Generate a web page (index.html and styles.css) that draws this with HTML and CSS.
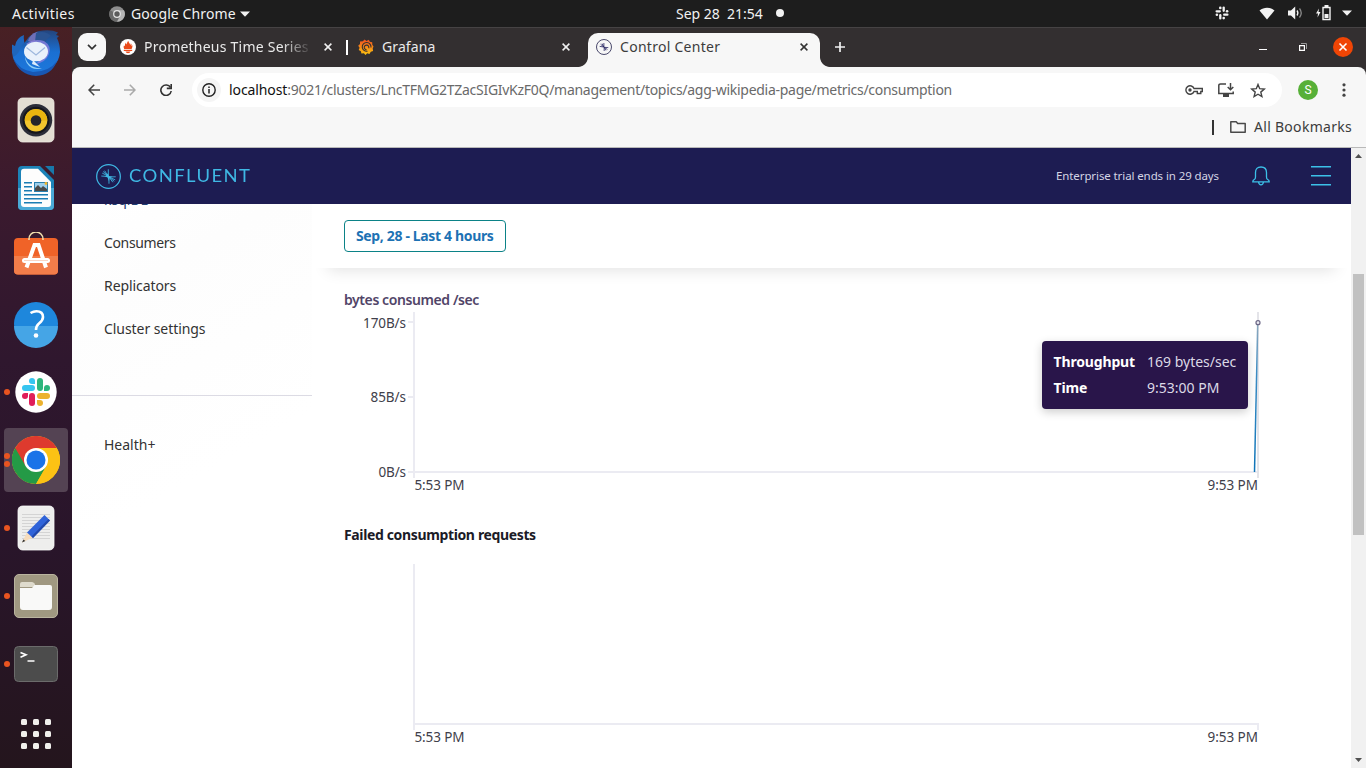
FILE: index.html
```html
<!DOCTYPE html>
<html lang="en">
<head>
<meta charset="utf-8">
<title>Control Center</title>
<link rel="stylesheet" href="styles.css">
</head>
<body>
<div class="desktop">
  <header class="topbar">
    <div class="topbar-left">
      <span class="t activities">Activities</span>
      <svg class="app-icon" width="16" height="16" viewBox="0 0 16 16"><circle cx="8" cy="8" r="7.8" fill="#8d8d8d"/><path d="M8 8L1.2 4.2A7.8 7.8 0 0 0 8 15.8L11 9.500z" fill="#6a6a6a"/><path d="M8 4.300H15a7.800 7.800 0 0 1-7 11.500l3.500-6z" fill="#b5b5b5"/><circle cx="8" cy="8" r="3.900" fill="#e6e6e6"/><circle cx="8" cy="8" r="2.700" fill="#5c5c5c"/></svg>
      <span class="t app-name">Google Chrome</span>
      <svg class="caret" width="10" height="6" viewBox="0 0 10 6"><path d="M0 0.500h10L5 5.700z" fill="#f2f2f2"/></svg>
    </div>
    <div class="clock"><span class="t day">Sep 28</span><span class="t time">21:54</span><i class="dot"></i></div>
    <div class="tray">
      <svg class="tray-slack" width="14" height="14" viewBox="0 0 14 14"><g fill="none" stroke="#f2f2f2" stroke-width="2.300" stroke-linecap="round"><path d="M1.600 5.300h3.200"/><path d="M8.700 1.600v3.200"/><path d="M9.200 8.700h3.200"/><path d="M5.300 9.200v3.200"/></g><g fill="#f2f2f2"><circle cx="5.300" cy="1.900" r="1.300"/><circle cx="12.100" cy="5.300" r="1.300"/><circle cx="8.700" cy="12.100" r="1.300"/><circle cx="1.900" cy="8.700" r="1.300"/></g></svg>
      <svg class="tray-wifi" width="16" height="13" viewBox="0 0 16 13"><path d="M.5 3.500C5-.3 11-.3 15.500 3.500L8 12.500z" fill="#f2f2f2"/></svg>
      <svg class="tray-vol" width="15" height="14" viewBox="0 0 15 14"><path d="M0 4.500h3L7.200.5v13L3 9.500H0z" fill="#f2f2f2"/><path d="M9 4.500q1.800 2.500 0 5" stroke="#f2f2f2" stroke-width="1.300" fill="none"/><path d="M11.500 2.500q3.500 4.500 0 9" stroke="#8a8a8a" stroke-width="1.300" fill="none"/></svg>
      <svg class="tray-bat" width="15" height="16" viewBox="0 0 15 16"><path d="M3 3.500L0 8.500h2L1.500 12.500l3-5.500h-2z" fill="#f2f2f2"/><path d="M7 2.500h7v12H7z" fill="none" stroke="#f2f2f2" stroke-width="1.400"/><path d="M8.500 0h4v2h-4zM8.500 9h4v4h-4z" fill="#f2f2f2"/></svg>
      <svg width="10" height="6" viewBox="0 0 10 6"><path d="M0 0.500h10L5 5.700z" fill="#f2f2f2"/></svg>
    </div>
  </header>

  <nav class="dock">
    <div class="dock-item first"><svg width="48" height="48" viewBox="0 0 48 48"><defs><linearGradient id="tb" x1="0" y1="0" x2="0" y2="1"><stop offset="0" stop-color="#24447c"/><stop offset=".5" stop-color="#1a6fd2"/><stop offset="1" stop-color="#1d78dc"/></linearGradient></defs><path d="M3 17Q4 9 12 6q-1 6 2 12L8 34 2 31Q-1 24 0 15.500z" fill="#1f66bd"/><path d="M14 12Q20 2 31 1.500q9-1 15 2l-2 2.500 3 1-2 2q3 6 3 14a24 23 0 0 1-47 5q5-2 7-8 2-5 6-8z" fill="url(#tb)"/><path d="M16 12q2-7 9-9l3 4-6 7q-3-1-6-2z" fill="#6e6fb8"/><path d="M24 4q9-3 15 3-3 1-6 6-5-3-10 0z" fill="#2a5392"/><path d="M14 15q8-6 18-3 8 5 5 13-3 8-13 10 7-6 6-14z" fill="#8a7fdd" opacity=".8"/><path d="M13 27q3 13 17 12-5 2-10 0-7-4-7-12z" fill="#8fd0f8"/><ellipse cx="24" cy="22.500" rx="12" ry="9.800" fill="#e9f1fb"/><path d="M14.500 18.500L24 26l9-7.500" fill="none" stroke="#9db7dd" stroke-width="1.200"/><path d="M21 31l7 7-8-3z" fill="#dcecfb"/><path d="M1 29q6 12 20 14 16 0 24-11-5 14-21 15Q7 46 1 29z" fill="#1857b4"/></svg></div>
    <div class="dock-item"><svg width="48" height="48" viewBox="0 0 48 48"><rect x="6" y="2" width="36" height="44" rx="4.500" fill="#e3ded3" stroke="#efebe3" stroke-width=".8"/><circle cx="24" cy="24.300" r="16.200" fill="#2b2d38"/><circle cx="24" cy="24.300" r="13.500" fill="#16171c"/><circle cx="24" cy="24.300" r="11.300" fill="#f2c52d"/><path d="M12.700 24.500a11.300 11.300 0 0 1 22.600 0z" fill="#e8b40f"/><circle cx="24" cy="24.500" r="5.300" fill="#24252b"/></svg></div>
    <div class="dock-item"><svg width="48" height="48" viewBox="0 0 48 48"><path d="M10 2h18l14 14v26a4 4 0 0 1-4 4H10a4 4 0 0 1-4-4V6a4 4 0 0 1 4-4z" fill="#1c83b8"/><path d="M6 24h36v18a4 4 0 0 1-4 4H10a4 4 0 0 1-4-4z" fill="#4aa9d6"/><path d="M12 4.800h14L39 18v22a3 3 0 0 1-3 3H12a3 3 0 0 1-3-3V7.800a3 3 0 0 1 3-3z" fill="#fdfdfd"/><path d="M33 2h9v9z" fill="#1878ab"/><path d="M12 18.700h8M12 22.700h8M12 26.700h8M12 30.700h24M12 34.700h24M12 38.700h18" stroke="#1b7db4" stroke-width="1.600"/><rect x="22.500" y="18.500" width="13" height="9" fill="#9fd0ec" stroke="#2a7fae"/><path d="M23 27v-3l3-3 3 3 2-2 4 3v2z" fill="#4b4b4b"/><circle cx="34" cy="19.500" r="1.400" fill="#f2b52b"/></svg></div>
    <div class="dock-item"><svg width="48" height="48" viewBox="0 0 48 48"><rect x="2" y="6" width="44" height="36.500" rx="4" fill="#f06328"/><path d="M2 24h44v14.500a4 4 0 0 1-4 4H6a4 4 0 0 1-4-4z" fill="#f27d4a"/><path d="M17 8v-1a7 7 0 0 1 14 0v1" fill="none" stroke="#f3e0ae" stroke-width="1.500"/><path d="M14.500 35.500L22.500 13h4L34 35.500" fill="none" stroke="#fff" stroke-width="4"/><rect x="10" y="26" width="28" height="5" rx="2.500" fill="#fff"/><path d="M12 28.500h24" stroke="#f9d5c5" stroke-width="1"/></svg></div>
    <div class="dock-item"><svg width="48" height="48" viewBox="0 0 48 48"><circle cx="24" cy="24" r="22" fill="#1e87dc"/><path d="M2 26a22 22 0 0 0 44 0z" fill="#45a5e6"/><path d="M18.500 13q3-1.800 6-1.800c4.500 0 6.500 2.300 6.500 5.800 0 3-1.500 4.500-4 6.500-2.300 1.800-3 3-3 6.500" fill="none" stroke="#fff" stroke-width="2.600"/><circle cx="24" cy="35.500" r="2.300" fill="#fff"/></svg></div>
    <div class="dock-item"><i class="run"></i><svg width="48" height="48" viewBox="0 0 48 48"><circle cx="24" cy="24" r="20.700" fill="#fff"/><g fill="none" stroke-width="6" stroke-linecap="round"><path d="M13 20h7" stroke="#36c5f0"/><path d="M28 13v7" stroke="#2eb67d"/><path d="M28 28h7" stroke="#ecb22e"/><path d="M20 28v7" stroke="#e01e5a"/></g><path d="M23 16h-3a3 3 0 1 1 3-3z" fill="#36c5f0"/><path d="M32 23v-3a3 3 0 1 1 3 3z" fill="#2eb67d"/><path d="M25 32h3a3 3 0 1 1-3 3z" fill="#ecb22e"/><path d="M16 25v3a3 3 0 1 1-3-3z" fill="#e01e5a"/></svg></div>
    <div class="dock-item active"><i class="run up"></i><i class="run down"></i><svg width="48" height="48" viewBox="0 0 48 48"><circle cx="24" cy="24" r="24" fill="#fcc214"/><path d="M24 24H24L3.200 12A24 24 0 0 0 24 48L34.400 30z" fill="#249a46"/><path d="M24 24L13.600 30 3.200 12A24 24 0 0 1 44.800 12z" fill="#de3a2e"/><path d="M24 12h20.800A24 24 0 0 1 24 48l10.400-18z" fill="#fcc214"/><circle cx="24" cy="24" r="12" fill="#fff"/><circle cx="24" cy="24" r="9.500" fill="#1a73e8"/></svg></div>
    <div class="dock-item"><i class="run"></i><svg width="48" height="48" viewBox="0 0 48 48"><rect x="6" y="2" width="36" height="44" rx="4.500" fill="#eeeeed" stroke="#fafafa" stroke-width=".8"/><path d="M10 10.500h28M10 13.500h28M10 16.500h28M10 19.500h28M10 22.500h28M10 25.500h28M10 28.500h28M10 31.500h28M10 34.500h28" stroke="#d4d4d4"/><path d="M10 38.500l5-10 6 5z" fill="#f6dcbc"/><path d="M10 38.500l1.400-3 2 1.500z" fill="#333"/><path d="M15 28.500L32.500 11l5.500 5.500-17 17.500z" fill="#2f63d9"/><path d="M19.500 32.500l17-17.500 1.500 1.500-17 17.500z" fill="#2148ab"/></svg></div>
    <div class="dock-item"><i class="run"></i><svg width="48" height="48" viewBox="0 0 48 48"><rect x="2.500" y="2.500" width="43" height="43" rx="4.500" fill="#a09881" stroke="#bab49f"/><path d="M8 12a2 2 0 0 1 2-2h10q1.500 0 2.500 1.500L24 15H8z" fill="#dfdbcd"/><path d="M8 16h12l2.500-3H38a2 2 0 0 1 2 2v20a3 3 0 0 1-3 3H11a3 3 0 0 1-3-3z" fill="#f9f9f8"/></svg></div>
    <div class="dock-item"><i class="run"></i><svg width="48" height="48" viewBox="0 0 48 48"><rect x="2.500" y="6.500" width="43" height="35" rx="4" fill="#4c4c4c" stroke="#6b6b6b"/><path d="M8.500 12.500l5.500 2.300-5.500 2.400" fill="none" stroke="#fff" stroke-width="1.600"/><path d="M15.500 21h7" stroke="#fff" stroke-width="1.500"/></svg></div>
    <div class="dock-grid"><i></i><i></i><i></i><i></i><i></i><i></i><i></i><i></i><i></i></div>
  </nav>

  <section class="window">
    <div class="tabstrip">
      <div class="tab-search"><svg width="10" height="6" viewBox="0 0 10 6"><path d="M1 .8l4 4 4-4" fill="none" stroke="#333" stroke-width="1.700"/></svg></div>
      <div class="tab tab-prom">
        <svg width="16" height="16" viewBox="0 0 16 16"><circle cx="8" cy="8" r="8" fill="#fff"/><path d="M4.200 10Q3 8 4 6.200q.8 1 1 1Q4.500 5 6 3.500q.2 1.500.8 2Q7 3 8.300 1.800q.2 1.500 1 2.300.8 1 .8 2 .8-.8.8-1.800 1 1.200.6 3l.9-1.200q.4 2-.8 3.900zM3.800 10.700h8.400v1.300H3.800zM5.500 12.600h5Q10 14.200 8 14.200T5.500 12.600z" fill="#ea4b1b"/></svg>
        <span class="tab-title fade"><span class="t prom-title">Prometheus Time Series</span></span>
        <svg class="x" width="8" height="8" viewBox="0 0 8 8"><path d="M.6.600l6.800 6.800M7.400.6L.6 7.400" stroke="#f0f0f0" stroke-width="1.500"/></svg>
      </div>
      <i class="tab-sep"></i>
      <div class="tab tab-graf">
        <svg width="16" height="16" viewBox="0 0 16 16"><defs><linearGradient id="gf" x1="0" y1="0" x2="0" y2="1"><stop offset="0" stop-color="#f0501f"/><stop offset="1" stop-color="#fcc50f"/></linearGradient></defs><path d="M6.500.6L8.500 2l2.300-1.200 1 2 2.400.4.100 2.500L15.500 7.500l-.8 2 .4 2.400-2.300.8-1.400 2.200-2.200-.7L7.500 16l-1.600-1.700-2.500.3-.5-2.300L.7 11l.9-2.200L.2 6.700 2 5.100l0-2.500 2.800-.3z" fill="url(#gf)"/><path d="M13 8.500A4.400 4.400 0 1 0 9.500 12.200M10.700 9.200A2.300 2.300 0 1 0 8.600 10.700" fill="none" stroke="#332f30" stroke-width="1.100"/></svg>
        <span class="tab-title"><span class="t grafana">Grafana</span></span>
        <svg class="x" width="8" height="8" viewBox="0 0 8 8"><path d="M.6.600l6.800 6.800M7.400.6L.6 7.400" stroke="#f0f0f0" stroke-width="1.500"/></svg>
      </div>
      <div class="tab tab-active">
        <svg width="16" height="16" viewBox="0 0 26 26"><circle cx="13" cy="13" r="12.200" fill="none" stroke="#3b3a60" stroke-width="1.500"/><path d="M12.500 13L6 12M12.500 13L7.500 8.500M12.500 13L10 7.500M12.800 13V6.500M13.500 13.500l6.500.5M13.500 13.500l5 3.500M13.500 13.500l2.500 5M13.300 13.500V19.500" stroke="#22205e" stroke-width="1.300"/></svg>
        <span class="tab-title"><span class="t control">Control Center</span></span>
        <svg class="x" width="8" height="8" viewBox="0 0 8 8"><path d="M.6.600l6.800 6.800M7.400.6L.6 7.400" stroke="#333" stroke-width="1.500"/></svg>
      </div>
      <svg class="plus" width="10" height="10" viewBox="0 0 10 10"><path d="M5 0v10M0 5h10" stroke="#f0f0f0" stroke-width="1.700"/></svg>
      <div class="win-buttons">
        <svg width="8" height="8" viewBox="0 0 8 8"><path d="M0 6.500h8" stroke="#fff"/></svg>
        <svg width="8" height="8" viewBox="0 0 8 8"><path d="M.6 2.600h4.800v4.800H.6z" fill="none" stroke="#fff" stroke-width="1.200"/><path d="M2 .5h5.500V6" fill="none" stroke="#999"/></svg>
        <svg width="20" height="20" viewBox="0 0 20 20"><circle cx="10" cy="10" r="10" fill="#f04505"/><path d="M6.500 6.500l7 7M13.500 6.500l-7 7" stroke="#fff" stroke-width="1.600"/></svg>
      </div>
    </div>

    <div class="toolbar-wrap"><div class="toolbar">
      <svg class="nav" width="12" height="12" viewBox="0 0 12 12"><path d="M12 6H1M6.200.7L1 6l5.200 5.300" fill="none" stroke="#444" stroke-width="1.600"/></svg>
      <svg class="nav" width="12" height="12" viewBox="0 0 12 12"><path d="M0 6h11M5.800.7L11 6l-5.200 5.300" fill="none" stroke="#aaa" stroke-width="1.600"/></svg>
      <svg class="nav" width="12" height="12" viewBox="0 0 12 12"><path d="M10.500 3.500A5.200 5.200 0 1 0 11.200 7" fill="none" stroke="#333" stroke-width="1.600"/><path d="M11.200 0v4.400H6.800" fill="none" stroke="#333" stroke-width="1.600"/></svg>
      <div class="omnibox">
        <span class="info"><svg width="14" height="14" viewBox="0 0 14 14"><circle cx="7" cy="7" r="6.200" fill="none" stroke="#222" stroke-width="1.400"/><path d="M7 6v4.500M7 3.500V5" stroke="#222" stroke-width="1.500"/></svg></span>
        <span class="url"><span class="t host">localhost</span><span class="t path">:9021/clusters/LncTFMG2TZacSIGIvKzF0Q/management/topics/agg-wikipedia-page/metrics/consumption</span></span>
        <svg class="key" width="18" height="10" viewBox="0 0 18 10"><path d="M9 3.500h8.300v3h-1.500v2h-3.500v-2H9A4.200 4.200 0 1 1 9 3.500z" fill="none" stroke="#444" stroke-width="1.400"/><circle cx="5" cy="5" r="1.700" fill="#444"/></svg>
        <svg class="inst" width="16" height="15" viewBox="0 0 16 15"><path d="M8 1H2.500Q.8 1 .8 2.500v8h14.400V8.500" fill="none" stroke="#444" stroke-width="1.500"/><path d="M5 11h6v3H5z" fill="#444"/><path d="M12.500 0v6.500M9.700 4l2.800 2.800L15.300 4" fill="none" stroke="#444" stroke-width="1.500"/></svg>
        <svg class="star" width="16" height="15" viewBox="0 0 16 15"><path d="M8 1.500l1.700 4.200 4.600.4-3.500 3 1.100 4.400L8 11.200l-3.900 2.300 1.100-4.400-3.500-3 4.600-.4z" fill="none" stroke="#444" stroke-width="1.400"/></svg>
      </div>
      <span class="avatar">S</span>
      <svg class="dots" width="4" height="14" viewBox="0 0 4 14" fill="#444"><circle cx="2" cy="1.800" r="1.600"/><circle cx="2" cy="7" r="1.600"/><circle cx="2" cy="12.200" r="1.600"/></svg>
    </div></div>

    <div class="bookmarks">
      <i class="bm-sep"></i>
      <svg width="16" height="12" viewBox="0 0 16 12"><path d="M.8.8h5.400l1.500 1.700h7.500v8.700H.8z" fill="none" stroke="#4a4a4a" stroke-width="1.500" stroke-linejoin="round"/></svg>
      <span class="t bm-text">All Bookmarks</span>
    </div>

    <div class="viewport">
      <div class="page">
        <div class="cc-header">
          <svg class="logo" width="25" height="25" viewBox="0 0 26 26" fill="none" stroke="#3fb8e4"><circle cx="13" cy="13" r="12.300" stroke-width="1.300"/><path d="M12.500 13L5.500 12.500M12.500 12.500L6.500 9.500M12.500 12.500L9 7M12.800 13V5.500M12.500 12.500L7.500 7.800" stroke-width=".9"/><path d="M13.500 13.500l7-.2M13.500 13.500l6.500 3M13.500 13.500l4 5.500M13.500 13.500l5.500 4.500M13.500 13.500V20.500" stroke-width=".9"/><path d="M9.500 13l3-3.500.8 3 4 .8-3.300 1.200-.5 3.500-1.500-4z" fill="#3fb8e4" stroke="none"/></svg>
          <span class="t wordmark">CONFLUENT</span>
          <span class="t trial">Enterprise trial ends in 29 days</span>
          <svg class="bell" width="18" height="20" viewBox="0 0 18 20" fill="none" stroke="#3cc0e8" stroke-width="1.300"><path d="M3.500 11V6.500Q3.500 1 9 1t5.500 5.500V11q0 2 1.200 2.500 1.500.6 1.500 2.300H.8q0-1.700 1.500-2.300Q3.500 13 3.500 11zM6.500 16Q7 18.800 9 18.800T11.500 16"/></svg>
          <svg class="burger" width="20" height="20" viewBox="0 0 20 20"><path d="M0 .7h20M0 9.700h20M0 18.700h20" stroke="#3cc0e8" stroke-width="1.400"/></svg>
        </div>
        <div class="cc-body">
          <aside class="side">
            <div class="side-list">
              <div class="side-item"><span class="t s1">ksqlDB</span></div>
              <div class="side-item"><span class="t s2">Consumers</span></div>
              <div class="side-item"><span class="t s3">Replicators</span></div>
              <div class="side-item"><span class="t s4">Cluster settings</span></div>
            </div>
            <div class="side-foot"><span class="t s5">Health+</span></div>
          </aside>
          <main class="main">
            <div class="filter"><div class="range"><span class="t range-text">Sep, 28 - Last 4 hours</span></div></div>
            <h2 class="title"><span class="t bytes">bytes consumed /sec</span></h2>
            <div class="chart">
              <svg width="1039" height="186" viewBox="312 310 1039 186">
                <path d="M414 312v166M408 322h6M408 397h6M408 472h850" stroke="#ebebf2" stroke-width="2" fill="none"/>
                <path d="M1258 312v166" stroke="#e4e4e9" stroke-width="2"/>
                <defs><linearGradient id="ln" gradientUnits="userSpaceOnUse" x1="0" y1="324" x2="0" y2="472"><stop offset="0" stop-color="#8fa9bd"/><stop offset=".35" stop-color="#3a8cc4"/><stop offset="1" stop-color="#0f74b8"/></linearGradient></defs>
                <path d="M1254.500 472L1257.700 324" stroke="url(#ln)" stroke-width="1.500" fill="none"/>
                <circle cx="1258" cy="322.700" r="2" fill="#e9e9f0" stroke="#6b6685" stroke-width="1.200"/>
                <g class="axis"><text x="363" y="328" textLength="43">170B/s</text><text x="370.500" y="402" textLength="35.500">85B/s</text><text x="378.500" y="477" textLength="27.500">0B/s</text><text x="414.500" y="490" textLength="50">5:53 PM</text><text x="1207.500" y="490" textLength="50.500">9:53 PM</text></g>
              </svg>
              <div class="tip"><b class="t k1">Throughput</b><span class="t v1">169 bytes/sec</span><b class="t k2">Time</b><span class="t v2">9:53:00 PM</span></div>
            </div>
            <h2 class="title second"><span class="t failed">Failed consumption requests</span></h2>
            <svg class="chart2" width="1039" height="190" viewBox="312 560 1039 190">
              <path d="M414 564v166M414 724h845M1258 724v6" stroke="#ebebf2" stroke-width="2" fill="none"/>
              <g class="axis"><text x="414.500" y="742" textLength="50">5:53 PM</text><text x="1207.500" y="742" textLength="50.500">9:53 PM</text></g>
            </svg>
          </main>
        </div>
      </div>
      <div class="scroll"><svg width="7" height="4" viewBox="0 0 7 4"><path d="M0 4L3.500 0 7 4z" fill="#505050"/></svg><i class="thumb"></i><svg width="7" height="4" viewBox="0 0 7 4"><path d="M0 0L3.500 4 7 0z" fill="#505050"/></svg></div>
    </div>
  </section>
</div>
</body>
</html>
```
FILE: styles.css
```css
* { box-sizing: border-box; }
body { margin: 0; font-family: "Noto Sans", "Open Sans", sans-serif; font-size: 14px; color: #333; }
svg { display: block; flex: none; }
i { display: block; flex: none; }
.t { white-space: nowrap; display: inline-block; }

.desktop { width: 1366px; height: 768px; overflow: hidden; display: grid; grid-template: 27px 741px / 72px 1294px; background: #fff; }

.topbar { grid-column: 1 / 3; background: #1d1d1d; color: #f2f2f2; display: grid; grid-template-columns: 676px 1fr 152px; align-items: center; font-size: 14px; }
.topbar-left { display: flex; align-items: center; padding-left: 12px; }
.activities { width: 97px; letter-spacing: .45px; }
.app-icon { margin-right: 6px; }
.app-name { width: 109px; letter-spacing: .1px; }
.clock { display: flex; align-items: center; padding-bottom: 1px; }
.day { width: 51px; }
.time { width: 49px; }
.dot { width: 8px; height: 8px; border-radius: 50%; background: #f2f2f2; }
.tray { display: flex; align-items: center; padding-bottom: 1px; }
.tray-slack { margin-left: 1px; margin-right: 30px; }
.tray-wifi { margin-right: 13px; }
.tray-vol { margin-right: 13px; }
.tray-bat { margin-right: 11px; }

.dock { background: linear-gradient(#482024 0, #3b1a2e 22%, #2f172e 45%, #29152a 70%, #24151d 100%); }
.dock-item { height: 68px; display: flex; align-items: center; justify-content: center; position: relative; }
.dock-item.first { height: 59px; padding-bottom: 7px; }
.dock-item.active { background: #544353; height: 64px; margin: 2px 4px; border-radius: 4px; }
.run { position: absolute; left: 4px; top: 31px; width: 6px; height: 6px; border-radius: 50%; background: #e95420; }
.active .run { left: 0; }
.active .run.up { top: 25px; }
.active .run.down { top: 33px; }
.dock-grid { display: grid; grid-template-columns: repeat(3, 6px); gap: 6px; margin: 21px 0 0 21px; }
.dock-grid i { width: 6px; height: 6px; border-radius: 1.5px; background: #f0efec; }

.window { display: flex; flex-direction: column; min-width: 0; }
.tabstrip { height: 40px; background: #332f30; border-top: 1px solid #464344; display: flex; align-items: center; padding-left: 6px; color: #eaeaea; }
.tab-search { width: 28px; height: 28px; margin-bottom: 1px; border-radius: 9px; background: #f7f7f7; display: flex; align-items: center; justify-content: center; }
.tab { height: 34px; margin-top: 5px; padding-bottom: 6px; display: flex; align-items: center; }
.tab-prom { margin-left: 14px; width: 212px; }
.tab-title { margin-left: 8px; width: 166px; line-height: 20px; padding-bottom: 1px; }
.tab-graf .tab-title { width: 180px; }
.tab-active .tab-title { width: 180px; color: #3c3c3c; }
.prom-title { letter-spacing: .23px; }
.control { letter-spacing: .28px; }
.grafana { letter-spacing: .1px; }
.fade { -webkit-mask-image: linear-gradient(90deg, #000 138px, transparent 168px); mask-image: linear-gradient(90deg, #000 138px, transparent 168px); }
.x { margin-left: auto; }
.tab-sep { width: 2px; height: 15px; background: #fff; margin-left: 14px; }
.tab-graf { margin-left: 10px; width: 212px; }
.tab-active { position: relative; margin-left: 18px; width: 232px; padding: 0 12px 6px 8px; background: #f7f7f7; border-radius: 10px 10px 0 0; }
.tab-active::before, .tab-active::after { content: ""; position: absolute; bottom: 0; width: 10px; height: 10px; }
.tab-active::before { left: -10px; background: radial-gradient(circle at 0 0, transparent 9.5px, #f7f7f7 10.3px); }
.tab-active::after { right: -10px; background: radial-gradient(circle at 100% 0, transparent 9.5px, #f7f7f7 10.3px); }
.plus { margin: 0 0 1px 15px; }
.win-buttons { margin-left: auto; display: flex; align-items: center; padding: 0 13px 1px 0; }
.win-buttons svg + svg { margin-left: 32px; }
.win-buttons svg:last-child { margin-left: 26px; }

.toolbar-wrap { background: #332f30; }
.toolbar { height: 46px; background: #f7f7f7; border-radius: 8px 8px 0 0; display: flex; align-items: center; padding-left: 16px; }
.nav { margin-right: 24px; }
.nav:nth-child(3) { margin-right: 20px; }
.omnibox { width: 1090px; height: 34px; border-radius: 17px; background: #fff; display: flex; align-items: center; padding-left: 5px; }
.info { width: 24px; height: 24px; border-radius: 50%; background: #f5f5f5; display: grid; place-items: center; margin-right: 8px; }
.url { width: 956px; white-space: nowrap; color: #6a6a6a; padding-bottom: 2px; }
.host { color: #111; letter-spacing: -.1px; }
.path { letter-spacing: -.28px; }
.inst { margin-left: 15px; }
.star { margin-left: 16px; }
.avatar { width: 20px; height: 20px; border-radius: 50%; background: #57b038; color: #fff; margin-left: 16px; font: 12px/20px Roboto, sans-serif; text-align: center; }
.dots { margin-left: 24px; }

.bookmarks { height: 35px; background: #f7f7f7; border-bottom: 1px solid #b9b9b9; display: flex; align-items: center; padding: 0 0 6px 1140px; color: #3c3c3c; }
.bm-sep { width: 2px; height: 15px; background: #333; margin-right: 16px; }
.bm-text { margin-left: 8px; padding-bottom: 2px; letter-spacing: .29px; }

.viewport { height: 620px; display: grid; grid-template-columns: 1279px 15px; }
.page { display: flex; flex-direction: column; min-width: 0; height: 620px; }
.cc-header { height: 56px; background: #1d1c52; display: flex; align-items: center; padding-left: 24px; }
.wordmark { font-family: Lato, sans-serif; font-weight: 400; font-size: 16.5px; letter-spacing: 1.25px; transform: scaleX(1.12); transform-origin: 0 50%; color: #3fb8e4; margin-left: 8px; width: 110px; margin-right: 817px; }
.trial { font-size: 11.5px; letter-spacing: -.1px; color: #d4d4e4; width: 196px; padding-bottom: 2px; }
.burger { margin-left: 41px; }
.cc-body { display: grid; grid-template-columns: 240px 1039px; height: 564px; overflow: hidden; }
.side { background: linear-gradient(150deg, #fff 0, #fdfdfd 100px, #fff 300px); overflow: hidden; font-size: 14px; }
.side-list { margin-top: -26px; height: 218px; border-bottom: 1px solid #dcdbe4; }
.side-item { height: 43px; display: flex; align-items: center; padding-left: 32px; }
.side-item:first-child { color: #1f4073; }
.s2 { letter-spacing: -.35px; }
.s3 { letter-spacing: -.08px; }
.s4 { letter-spacing: -.06px; }
.side-foot { height: 96px; display: flex; align-items: center; padding-left: 32px; }
.main { overflow: hidden; }
.filter { height: 64px; padding: 16px 32px; background: #fff; box-shadow: 0 18px 16px -16px rgba(0, 0, 0, .12); }
.range { width: 162px; height: 32px; border: 1px solid #0b8287; border-radius: 4px; display: flex; align-items: center; padding: 0 0 2px 11px; color: #1d72b4; font-weight: 700; }
.range-text { letter-spacing: -.35px; }
.title { margin: 0; padding: 22px 0 0 32px; height: 42px; font-size: 14px; line-height: 20px; font-weight: 600; color: #514568; }
.bytes { letter-spacing: -.41px; }
.second { padding-top: 29px; height: 64px; color: #1b1b27; font-weight: 700; }
.failed { letter-spacing: -.36px; }
.chart { position: relative; height: 186px; }
.axis { font: 400 13.5px "Noto Sans", "Open Sans", sans-serif; fill: #40404a; }
.tip { position: absolute; left: 729.5px; top: 31px; width: 206.5px; height: 68px; border-radius: 4px; background: #29154a; color: #dcd9e6; box-shadow: 0 3px 10px rgba(0, 0, 0, .2); display: grid; grid-template: 26px 26px / 93.5px 1fr; align-items: center; padding: 7px 0 0 12px; }
.tip b { color: #fff; letter-spacing: -.15px; }
.scroll { background: #f1f1f1; display: flex; flex-direction: column; align-items: center; justify-content: space-between; padding: 6px 0; }
.thumb { width: 11px; height: 261px; background: #c1c1c1; margin-bottom: 108px; }
```
